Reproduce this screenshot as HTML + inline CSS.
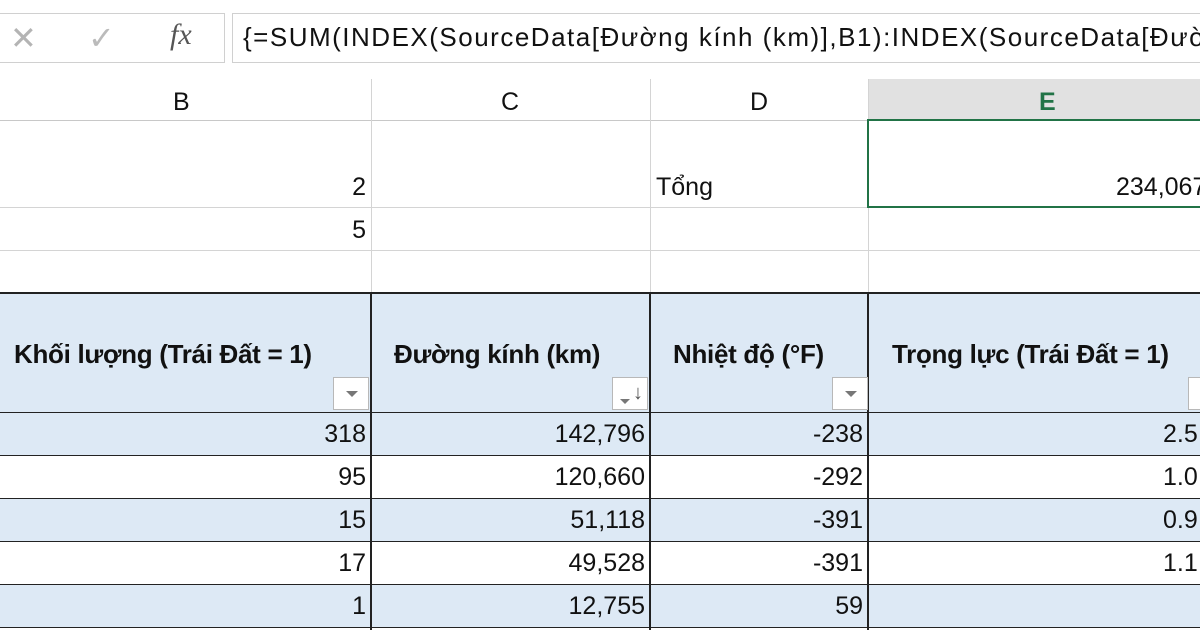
<!DOCTYPE html>
<html><head><meta charset="utf-8"><style>
*{margin:0;padding:0;box-sizing:border-box}
body{width:1200px;height:630px;overflow:hidden;background:#fff;margin:0}
#w{position:relative;width:1200px;height:630px;overflow:hidden;font-family:"Liberation Sans",sans-serif;color:#111}
.a{position:absolute}
.t{position:absolute;font-size:25px;white-space:nowrap;line-height:1}
.r{text-align:right}
.hl{position:absolute;height:1px;background:#d4d4d4}
.vl{position:absolute;width:1px;background:#d4d4d4}
.bk{background:#222}
.dd{position:absolute;width:36px;height:33px;background:#fff;border:1px solid #b8b8b8}
.dd:after{content:"";position:absolute;left:12px;top:13px;border-left:6px solid transparent;border-right:6px solid transparent;border-top:6px solid #777}
.b{font-weight:bold;font-size:26px;letter-spacing:-0.3px}
</style></head><body><div id="w">
<div class="a" style="left:-2px;top:13px;width:227px;height:50px;border:1px solid #d0d0d0"></div>
<div class="a" style="left:232px;top:13px;width:968px;height:50px;border:1px solid #d0d0d0;border-right:none"></div>
<div class="t" style="left:10px;top:22px;font-size:32px;color:#b4b4b4">✕</div>
<div class="t" style="left:88px;top:22px;font-size:32px;color:#bbb">✓</div>
<div class="t" style="left:170px;top:20px;font-size:30px;font-family:'Liberation Serif',serif;font-style:italic;color:#555">fx</div>
<div class="a" style="left:243px;top:24px;width:957px;height:32px;overflow:hidden"><div class="t" style="left:0;top:0;font-size:26px;letter-spacing:1.5px">{=SUM(INDEX(SourceData[Đường kính (km)],B1):INDEX(SourceData[Đường kính (km)],B2))}</div></div>
<div class="a" style="left:868px;top:79px;width:332px;height:41px;background:#e1e1e1"></div>
<div class="hl" style="left:0;top:120px;width:1200px;background:#c8c8c8"></div>
<div class="vl" style="left:371px;top:79px;height:41px"></div>
<div class="vl" style="left:650px;top:79px;height:41px"></div>
<div class="vl" style="left:868px;top:79px;height:41px"></div>
<div class="t" style="left:173px;top:90px">B</div>
<div class="t" style="left:501px;top:90px">C</div>
<div class="t" style="left:750px;top:90px">D</div>
<div class="t" style="left:1039px;top:90px;font-weight:bold;color:#217346">E</div>
<div class="hl" style="left:0;top:207px;width:1200px"></div>
<div class="hl" style="left:0;top:250px;width:1200px"></div>
<div class="vl" style="left:371px;top:120px;height:172px"></div>
<div class="vl" style="left:650px;top:120px;height:172px"></div>
<div class="vl" style="left:868px;top:120px;height:172px"></div>
<div class="t r" style="right:834px;top:175px">2</div>
<div class="t r" style="right:834px;top:218px">5</div>
<div class="t" style="left:656px;top:175px">Tổng</div>
<div class="t" style="left:1116px;top:175px">234,067</div>
<div class="a" style="left:867px;top:119px;width:340px;height:89px;border:2px solid #217346;border-right:none"></div>
<div class="a" style="left:0;top:292px;width:1200px;height:120px;background:#dde9f5"></div>
<div class="a" style="left:0;top:412px;width:1200px;height:43px;background:#dde9f5"></div>
<div class="a" style="left:0;top:498px;width:1200px;height:43px;background:#dde9f5"></div>
<div class="a" style="left:0;top:584px;width:1200px;height:43px;background:#dde9f5"></div>
<div class="hl bk" style="left:0;top:292px;width:1200px;height:2px"></div>
<div class="hl bk" style="left:0;top:412px;width:1200px"></div>
<div class="hl bk" style="left:0;top:455px;width:1200px"></div>
<div class="hl bk" style="left:0;top:498px;width:1200px"></div>
<div class="hl bk" style="left:0;top:541px;width:1200px"></div>
<div class="hl bk" style="left:0;top:584px;width:1200px"></div>
<div class="hl bk" style="left:0;top:627px;width:1200px"></div>
<div class="vl bk" style="left:370px;top:292px;height:338px;width:2px"></div>
<div class="vl bk" style="left:649px;top:292px;height:338px;width:2px"></div>
<div class="vl bk" style="left:867px;top:292px;height:338px;width:2px"></div>
<div class="t b" style="left:14px;top:341px">Khối lượng (Trái Đất = 1)</div>
<div class="t b" style="left:394px;top:341px">Đường kính (km)</div>
<div class="t b" style="left:673px;top:341px">Nhiệt độ (°F)</div>
<div class="t b" style="left:892px;top:341px">Trọng lực (Trái Đất = 1)</div>
<div class="dd" style="left:333px;top:377px"></div>
<div class="a" style="left:612px;top:377px;width:36px;height:33px;background:#fff;border:1px solid #b8b8b8"><div class="a" style="left:7px;top:21px;border-left:5px solid transparent;border-right:5px solid transparent;border-top:5px solid #777"></div><div class="a" style="left:20px;top:5px;font-size:20px;color:#555;line-height:1">↓</div></div>
<div class="dd" style="left:832px;top:377px"></div>
<div class="a" style="left:1188px;top:377px;width:12px;height:33px;background:#fff;border:1px solid #b8b8b8;border-right:none"></div>
<div class="t r" style="right:834px;top:422px">318</div>
<div class="t r" style="right:834px;top:465px">95</div>
<div class="t r" style="right:834px;top:508px">15</div>
<div class="t r" style="right:834px;top:551px">17</div>
<div class="t r" style="right:834px;top:594px">1</div>
<div class="t r" style="right:555px;top:422px">142,796</div>
<div class="t r" style="right:555px;top:465px">120,660</div>
<div class="t r" style="right:555px;top:508px">51,118</div>
<div class="t r" style="right:555px;top:551px">49,528</div>
<div class="t r" style="right:555px;top:594px">12,755</div>
<div class="t r" style="right:337px;top:422px">-238</div>
<div class="t r" style="right:337px;top:465px">-292</div>
<div class="t r" style="right:337px;top:508px">-391</div>
<div class="t r" style="right:337px;top:551px">-391</div>
<div class="t r" style="right:337px;top:594px">59</div>
<div class="t" style="left:1163px;top:422px">2.5</div>
<div class="t" style="left:1163px;top:465px">1.0</div>
<div class="t" style="left:1163px;top:508px">0.9</div>
<div class="t" style="left:1163px;top:551px">1.1</div>
</div></body></html>
